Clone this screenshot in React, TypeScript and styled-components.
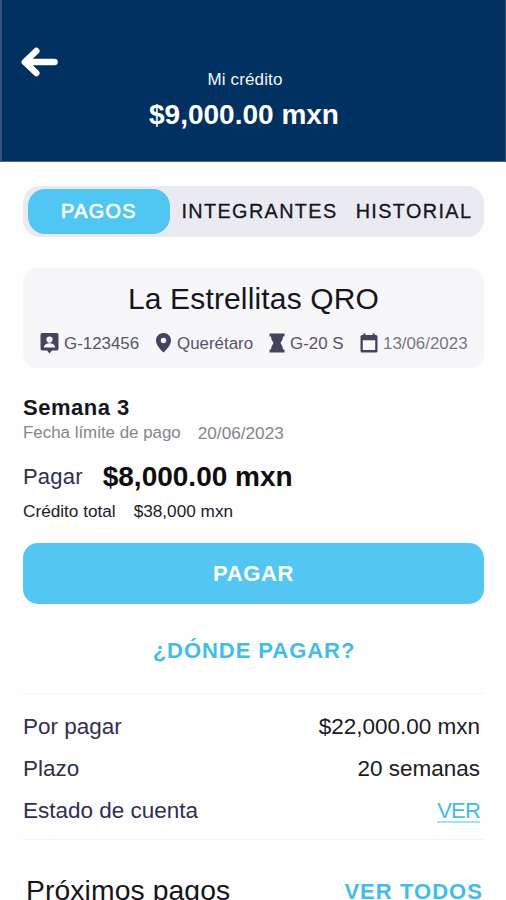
import React from "react";
import styled, { createGlobalStyle } from "styled-components";

const GlobalStyle = createGlobalStyle`
  * { box-sizing: border-box; }
  body {
    margin: 0;
    background: #fefefe;
    font-family: "Liberation Sans", Arial, sans-serif;
    overflow: hidden;
  }
  button { font: inherit; border: 0; background: none; padding: 0; cursor: pointer; }
`;

const Screen = styled.div`
  width: 506px;
  height: 900px;
  overflow: hidden;
  background: #fefefe;
`;

const Header = styled.header`
  height: 162px;
  display: grid;
  grid-template-columns: 96px 1fr 115px;
  background: #003160;
  border-left: 2px solid #36507a;
  border-right: 1px solid #36507a;
  border-bottom: 1px solid #506688;
`;

const BackButton = styled.button`
  align-self: start;
  justify-self: start;
  margin: 46px 0 0 18px;
  height: 32px;
  svg { display: block; }
`;

const Balance = styled.div`
  display: flex;
  flex-direction: column;
  align-items: center;
  padding-top: 70px;
  white-space: nowrap;
  color: #fff;
`;

const BalanceLabel = styled.span`
  padding-left: 2px;
  font-size: 17px;
  line-height: 20px;
  letter-spacing: 0.15px;
  color: #f4f6fb;
`;

const BalanceAmount = styled.strong`
  margin-top: 9px;
  font-size: 28px;
  line-height: 32px;
`;

const Content = styled.main`
  width: 461px;
  margin: 24px 0 0 23px;
`;

const Tabs = styled.nav`
  height: 51px;
  padding: 2px 5px;
  display: flex;
  align-items: center;
  border-radius: 17px;
  background: #eaebf2;
`;

const Tab = styled.button<{ $active?: boolean; $width: number }>`
  width: ${(p) => p.$width}px;
  height: 45px;
  border-radius: 17px;
  background: ${(p) => (p.$active ? "#50c6f2" : "transparent")};
  color: ${(p) => (p.$active ? "#fff" : "#15151f")};
  -webkit-text-stroke: ${(p) => (p.$active ? "0.7px" : "0.3px")} currentColor;
  font-size: 19.8px;
  letter-spacing: 1.4px;
  white-space: nowrap;
`;

const GroupCard = styled.section`
  height: 100px;
  margin-top: 31px;
  padding-top: 13px;
  border-radius: 14px;
  background: #f7f7fa;
`;

const GroupName = styled.h1`
  margin: 0;
  font-size: 30px;
  font-weight: 400;
  line-height: 36px;
  letter-spacing: 0.15px;
  text-align: center;
  color: #15151b;
`;

const Facts = styled.div`
  display: grid;
  grid-template-columns: 115px 114px 91px 1fr;
  margin: 14px 0 0 17px;
`;

const Fact = styled.span<{ $color: string }>`
  display: flex;
  align-items: center;
  height: 24px;
  gap: 5px;
  font-size: 16.9px;
  line-height: 24px;
  white-space: nowrap;
  color: ${(p) => p.$color};
  svg { flex: none; color: #44445f; }
`;

const FactText = styled.span`
  padding-top: 1px;
`;

const Week = styled.section`
  margin-top: 27px;
  white-space: nowrap;
`;

const WeekTitle = styled.h2`
  margin: 0;
  font-size: 22px;
  line-height: 25px;
  letter-spacing: 0.5px;
  color: #15151b;
`;

const Line = styled.div<{ $height: number; $gap: number; $color: string; $top?: number }>`
  display: flex;
  gap: ${(p) => p.$gap}px;
  height: ${(p) => p.$height}px;
  line-height: ${(p) => p.$height}px;
  margin-top: ${(p) => p.$top ?? 0}px;
  font-size: 17.2px;
  color: ${(p) => p.$color};
`;

const DueLabel = styled.span`
  font-size: 16.9px;
`;

const PayLabel = styled.span`
  font-size: 22px;
  letter-spacing: 0.2px;
  color: #302f52;
`;

const PayAmount = styled.strong`
  font-size: 28px;
  color: #0d0d12;
`;

const PayButton = styled.button`
  display: block;
  width: 100%;
  height: 61px;
  margin-top: 20px;
  padding-top: 1px;
  border-radius: 15px;
  background: #53c7f2;
  color: #fff;
  font-size: 22px;
  font-weight: 700;
  letter-spacing: 0.6px;
`;

const WhereLink = styled.button`
  display: block;
  width: 100%;
  height: 30px;
  margin-top: 31px;
  padding-left: 1px;
  font-size: 22px;
  line-height: 31px;
  font-weight: 700;
  letter-spacing: 0.95px;
  color: #43bce8;
`;

const Details = styled.dl`
  height: 147px;
  margin: 28px 0 0;
  padding: 13px 4px 0 0;
  border-top: 1px solid #f3f3f5;
  border-bottom: 1px solid #f3f3f5;
`;

const DetailRow = styled.div`
  display: flex;
  justify-content: space-between;
  height: 42px;
  line-height: 40px;
  font-size: 22.5px;
`;

const DetailLabel = styled.dt`
  color: #302f52;
`;

const DetailValue = styled.dd`
  margin: 0;
  color: #1b1b26;
`;

const StatementLink = styled.a`
  display: block;
  height: 32px;
  border-bottom: 2px solid #a5dff6;
  font-size: 22px;
  letter-spacing: -0.8px;
  color: #43bce8;
`;

const Upcoming = styled.section`
  display: flex;
  justify-content: space-between;
  align-items: flex-start;
  margin-top: 32px;
  padding: 0 1px 0 3px;
  white-space: nowrap;
`;

const UpcomingTitle = styled.h2`
  margin: 0;
  font-size: 28.3px;
  line-height: 36px;
  font-weight: 400;
  letter-spacing: 0.1px;
  color: #15151b;
`;

const SeeAll = styled.button`
  font-size: 22px;
  line-height: 40px;
  font-weight: 700;
  letter-spacing: 1.05px;
  color: #43bce8;
`;

const ArrowIcon = () => (
  <svg width="40" height="32" viewBox="0 0 40 32" fill="none" stroke="#fff" strokeWidth="6.5" strokeLinecap="round" strokeLinejoin="round">
    <path d="M16.3 5 4.8 16l11.500 11M6 16h28.500" />
  </svg>
);

const BadgeIcon = () => (
  <svg width="19" height="22" viewBox="0 0 19 22">
    <path fill="currentColor" d="M2.2 1h14.6Q18.5 1 18.5 2.8v14Q18.5 18.5 16.8 18.5H12L9.5 21.5 7 18.5H2.2Q.5 18.5.5 16.8v-14Q.5 1 2.2 1Z" />
    <circle cx="9.5" cy="7.6" r="3.1" fill="#f7f7fa" />
    <path fill="#f7f7fa" d="M3.9 15.4c0-2.8 3.2-4.1 5.6-4.1s5.6 1.3 5.6 4.1Z" />
  </svg>
);

const PinIcon = () => (
  <svg width="17" height="22" viewBox="0 0 17 22">
    <path fill="currentColor" fillRule="evenodd" d="M8.500 1C4.200 1 1 4.300 1 8.500c0 4.800 4.800 9.500 7.500 12C11.200 18 16 13.300 16 8.500 16 4.300 12.800 1 8.500 1Zm0 4.800a2.700 2.700 0 1 1 0 5.400 2.700 2.700 0 0 1 0-5.400Z" />
  </svg>
);

const HourglassIcon = () => (
  <svg width="16" height="22" viewBox="0 0 16 22">
    <path fill="currentColor" d="M.5 1.500h15v3H14c0 3-1.500 4.500-2.500 6.500 1 2 2.500 3.500 2.500 6.500h1.500v3H.5v-3H2c0-3 1.500-4.500 2.500-6.500C3.500 9 2 7.500 2 4.500H.5Z" />
  </svg>
);

const CalendarIcon = () => (
  <svg width="18" height="22" viewBox="0 0 18 22">
    <path fill="currentColor" fillRule="evenodd" d="M3.200 1.500h2.300V3h7V1.500h2.300V3H16q1.500 0 1.500 1.600v14.300q0 1.600-1.500 1.600H2Q.5 20.500.5 18.900V4.600Q.5 3 2 3h1.200ZM2.800 8.300v9.800h12.400V8.300Z" />
  </svg>
);

export default function App() {
  return (
    <Screen>
      <GlobalStyle />
      <Header>
        <BackButton aria-label="Volver"><ArrowIcon /></BackButton>
        <Balance>
          <BalanceLabel>Mi crédito</BalanceLabel>
          <BalanceAmount>$9,000.00 mxn</BalanceAmount>
        </Balance>
      </Header>
      <Content>
        <Tabs>
          <Tab $active $width={142}>PAGOS</Tab>
          <Tab $width={179}>INTEGRANTES</Tab>
          <Tab $width={130}>HISTORIAL</Tab>
        </Tabs>
        <GroupCard>
          <GroupName>La Estrellitas QRO</GroupName>
          <Facts>
            <Fact $color="#565566"><BadgeIcon /><FactText>G-123456</FactText></Fact>
            <Fact $color="#565566"><PinIcon /><FactText>Querétaro</FactText></Fact>
            <Fact $color="#565566"><HourglassIcon /><FactText>G-20 S</FactText></Fact>
            <Fact $color="#777783"><CalendarIcon /><FactText>13/06/2023</FactText></Fact>
          </Facts>
        </GroupCard>
        <Week>
          <WeekTitle>Semana 3</WeekTitle>
          <Line $height={26} $gap={17} $color="#85858c">
            <DueLabel>Fecha límite de pago</DueLabel>
            <span>20/06/2023</span>
          </Line>
          <Line $height={36} $gap={20} $color="#302f52" $top={13}>
            <PayLabel>Pagar</PayLabel>
            <PayAmount>$8,000.00 mxn</PayAmount>
          </Line>
          <Line $height={24} $gap={18} $color="#1b1b26" $top={4}>
            <span>Crédito total</span>
            <span>$38,000 mxn</span>
          </Line>
        </Week>
        <PayButton>PAGAR</PayButton>
        <WhereLink>¿DÓNDE PAGAR?</WhereLink>
        <Details>
          <DetailRow>
            <DetailLabel>Por pagar</DetailLabel>
            <DetailValue>$22,000.00 mxn</DetailValue>
          </DetailRow>
          <DetailRow>
            <DetailLabel>Plazo</DetailLabel>
            <DetailValue>20 semanas</DetailValue>
          </DetailRow>
          <DetailRow>
            <DetailLabel>Estado de cuenta</DetailLabel>
            <DetailValue><StatementLink>VER</StatementLink></DetailValue>
          </DetailRow>
        </Details>
        <Upcoming>
          <UpcomingTitle>Próximos pagos</UpcomingTitle>
          <SeeAll>VER TODOS</SeeAll>
        </Upcoming>
      </Content>
    </Screen>
  );
}
